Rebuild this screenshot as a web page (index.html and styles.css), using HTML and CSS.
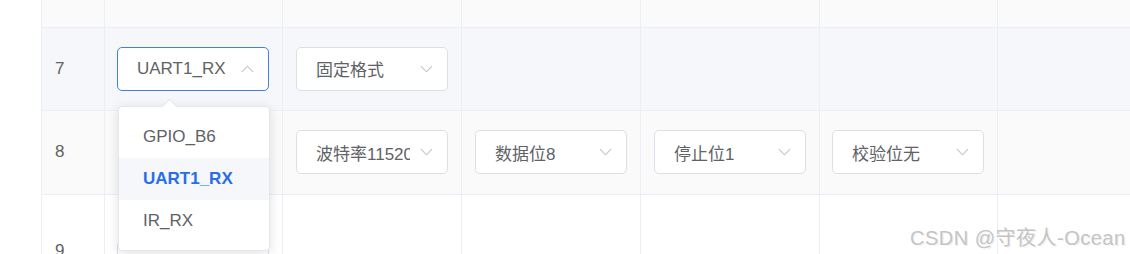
FILE: index.html
```html
<!DOCTYPE html>
<html>
<head>
<meta charset="utf-8">
<link rel="stylesheet" href="styles.css">
</head>
<body>
<div class="page">
  <table class="grid">
    <colgroup>
      <col class="c-idx"><col class="c-a"><col class="c-b"><col class="c-b"><col class="c-b"><col class="c-a"><col class="c-rest">
    </colgroup>
    <tr class="row row-top stripe"><td></td><td></td><td></td><td></td><td></td><td></td><td></td></tr>
    <tr class="row row-main hover">
      <td class="idx">7</td>
      <td class="pin-cell">
        <div class="select focused">
          <span class="val">UART1_RX</span>
          <svg class="arrow up" viewBox="0 0 14 8"><path d="M1 7 L7 1 L13 7" fill="none" stroke="#c0c4cc" stroke-width="1.2"/></svg>
        </div>
        <div class="dropdown">
          <div class="tip"></div>
          <div class="item">GPIO_B6</div>
          <div class="item selected">UART1_RX</div>
          <div class="item">IR_RX</div>
        </div>
      </td>
      <td class="mid"><div class="select"><span class="val">固定格式</span><svg class="arrow" viewBox="0 0 14 8"><path d="M1 1 L7 7 L13 1" fill="none" stroke="#c0c4cc" stroke-width="1.2"/></svg></div></td>
      <td></td><td></td><td></td><td></td>
    </tr>
    <tr class="row row-main2 stripe">
      <td class="idx">8</td>
      <td></td>
      <td class="mid"><div class="select"><span class="val">波特率115200</span><svg class="arrow" viewBox="0 0 14 8"><path d="M1 1 L7 7 L13 1" fill="none" stroke="#c0c4cc" stroke-width="1.2"/></svg></div></td>
      <td class="mid"><div class="select"><span class="val">数据位8</span><svg class="arrow" viewBox="0 0 14 8"><path d="M1 1 L7 7 L13 1" fill="none" stroke="#c0c4cc" stroke-width="1.2"/></svg></div></td>
      <td class="mid"><div class="select"><span class="val">停止位1</span><svg class="arrow" viewBox="0 0 14 8"><path d="M1 1 L7 7 L13 1" fill="none" stroke="#c0c4cc" stroke-width="1.2"/></svg></div></td>
      <td><div class="select"><span class="val">校验位无</span><svg class="arrow" viewBox="0 0 14 8"><path d="M1 1 L7 7 L13 1" fill="none" stroke="#c0c4cc" stroke-width="1.2"/></svg></div></td>
      <td></td>
    </tr>
    <tr class="row row-last">
      <td class="idx">9</td>
      <td><div class="select plain"><span class="val">引脚功能描述</span></div></td>
      <td></td><td></td><td></td><td></td><td></td>
    </tr>
  </table>
  <div class="watermark">CSDN @守夜人-Ocean</div>
</div>
</body>
</html>
```

FILE: styles.css
```css
html, body {
  margin: 0;
  padding: 0;
  background: #fff;
  overflow: hidden;
}
body {
  font-family: "Liberation Sans", "Noto Sans CJK SC", sans-serif;
  color: #606266;
  width: 1130px;
  height: 254px;
}
.page {
  position: relative;
  width: 1130px;
  height: 254px;
  overflow: hidden;
  padding-left: 41px;
  box-sizing: border-box;
}
.grid {
  border-collapse: collapse;
  table-layout: fixed;
  width: 1118px;
}
.c-idx { width: 63px; }
.c-a { width: 178px; }
.c-b { width: 179px; }
.c-rest { width: 162px; }
.grid td {
  border: 1px solid #ebeef5;
  border-top: 0;
  padding: 0 12px;
  vertical-align: middle;
  font-size: 17px;
  box-sizing: border-box;
}
.grid td.mid { padding-left: 13px; }
.row-top td { height: 27px; }
.row-main td { height: 83px; }
.row-main2 td { height: 84px; }
.row-last td { height: 120px; vertical-align: top; padding-top: 46px; }
.stripe td { background: #fafafa; }
.hover td { background: #f5f7fa; }
.grid td.idx { color: #606266; padding-left: 13px; }
.pin-cell { position: relative; }
.select {
  width: 152px;
  height: 44px;
  box-sizing: border-box;
  border: 1px solid #dcdfe6;
  border-radius: 5px;
  background: #fff;
  display: flex;
  align-items: center;
  padding: 0 14px 0 19px;
  gap: 10px;
}
.select .val {
  flex: 1;
  white-space: nowrap;
  overflow: hidden;
  color: #606266;
  font-size: 17px;
}
.select.focused { border-color: #3f80e0; }
.select.plain .val { color: #303133; }
.arrow {
  width: 13px;
  height: 8px;
  flex: none;
}
.dropdown {
  position: absolute;
  left: 13px;
  top: 78px;
  width: 152px;
  box-sizing: border-box;
  background: #fff;
  border: 1px solid #e4e7ed;
  border-radius: 4px;
  box-shadow: 0 2px 12px rgba(0, 0, 0, 0.12);
  padding: 9px 0 8px;
  z-index: 5;
}
.tip {
  position: absolute;
  top: -6px;
  left: 45px;
  width: 10px;
  height: 10px;
  background: #fff;
  border-left: 1px solid #e4e7ed;
  border-top: 1px solid #e4e7ed;
  transform: rotate(45deg);
}
.item {
  position: relative;
  height: 42px;
  line-height: 42px;
  padding: 0 24px;
  font-size: 17px;
  color: #606266;
  white-space: nowrap;
}
.item.selected {
  background: #f5f7fa;
  color: #286ee6;
  font-weight: bold;
}
.watermark {
  position: absolute;
  left: 910px;
  top: 222px;
  font-size: 20px;
  color: #c4c4c4;
  text-shadow: 0 1px 1px #fff, 1px 1px 0 #e8e8e8;
  white-space: nowrap;
  letter-spacing: 0.5px;
}
```
